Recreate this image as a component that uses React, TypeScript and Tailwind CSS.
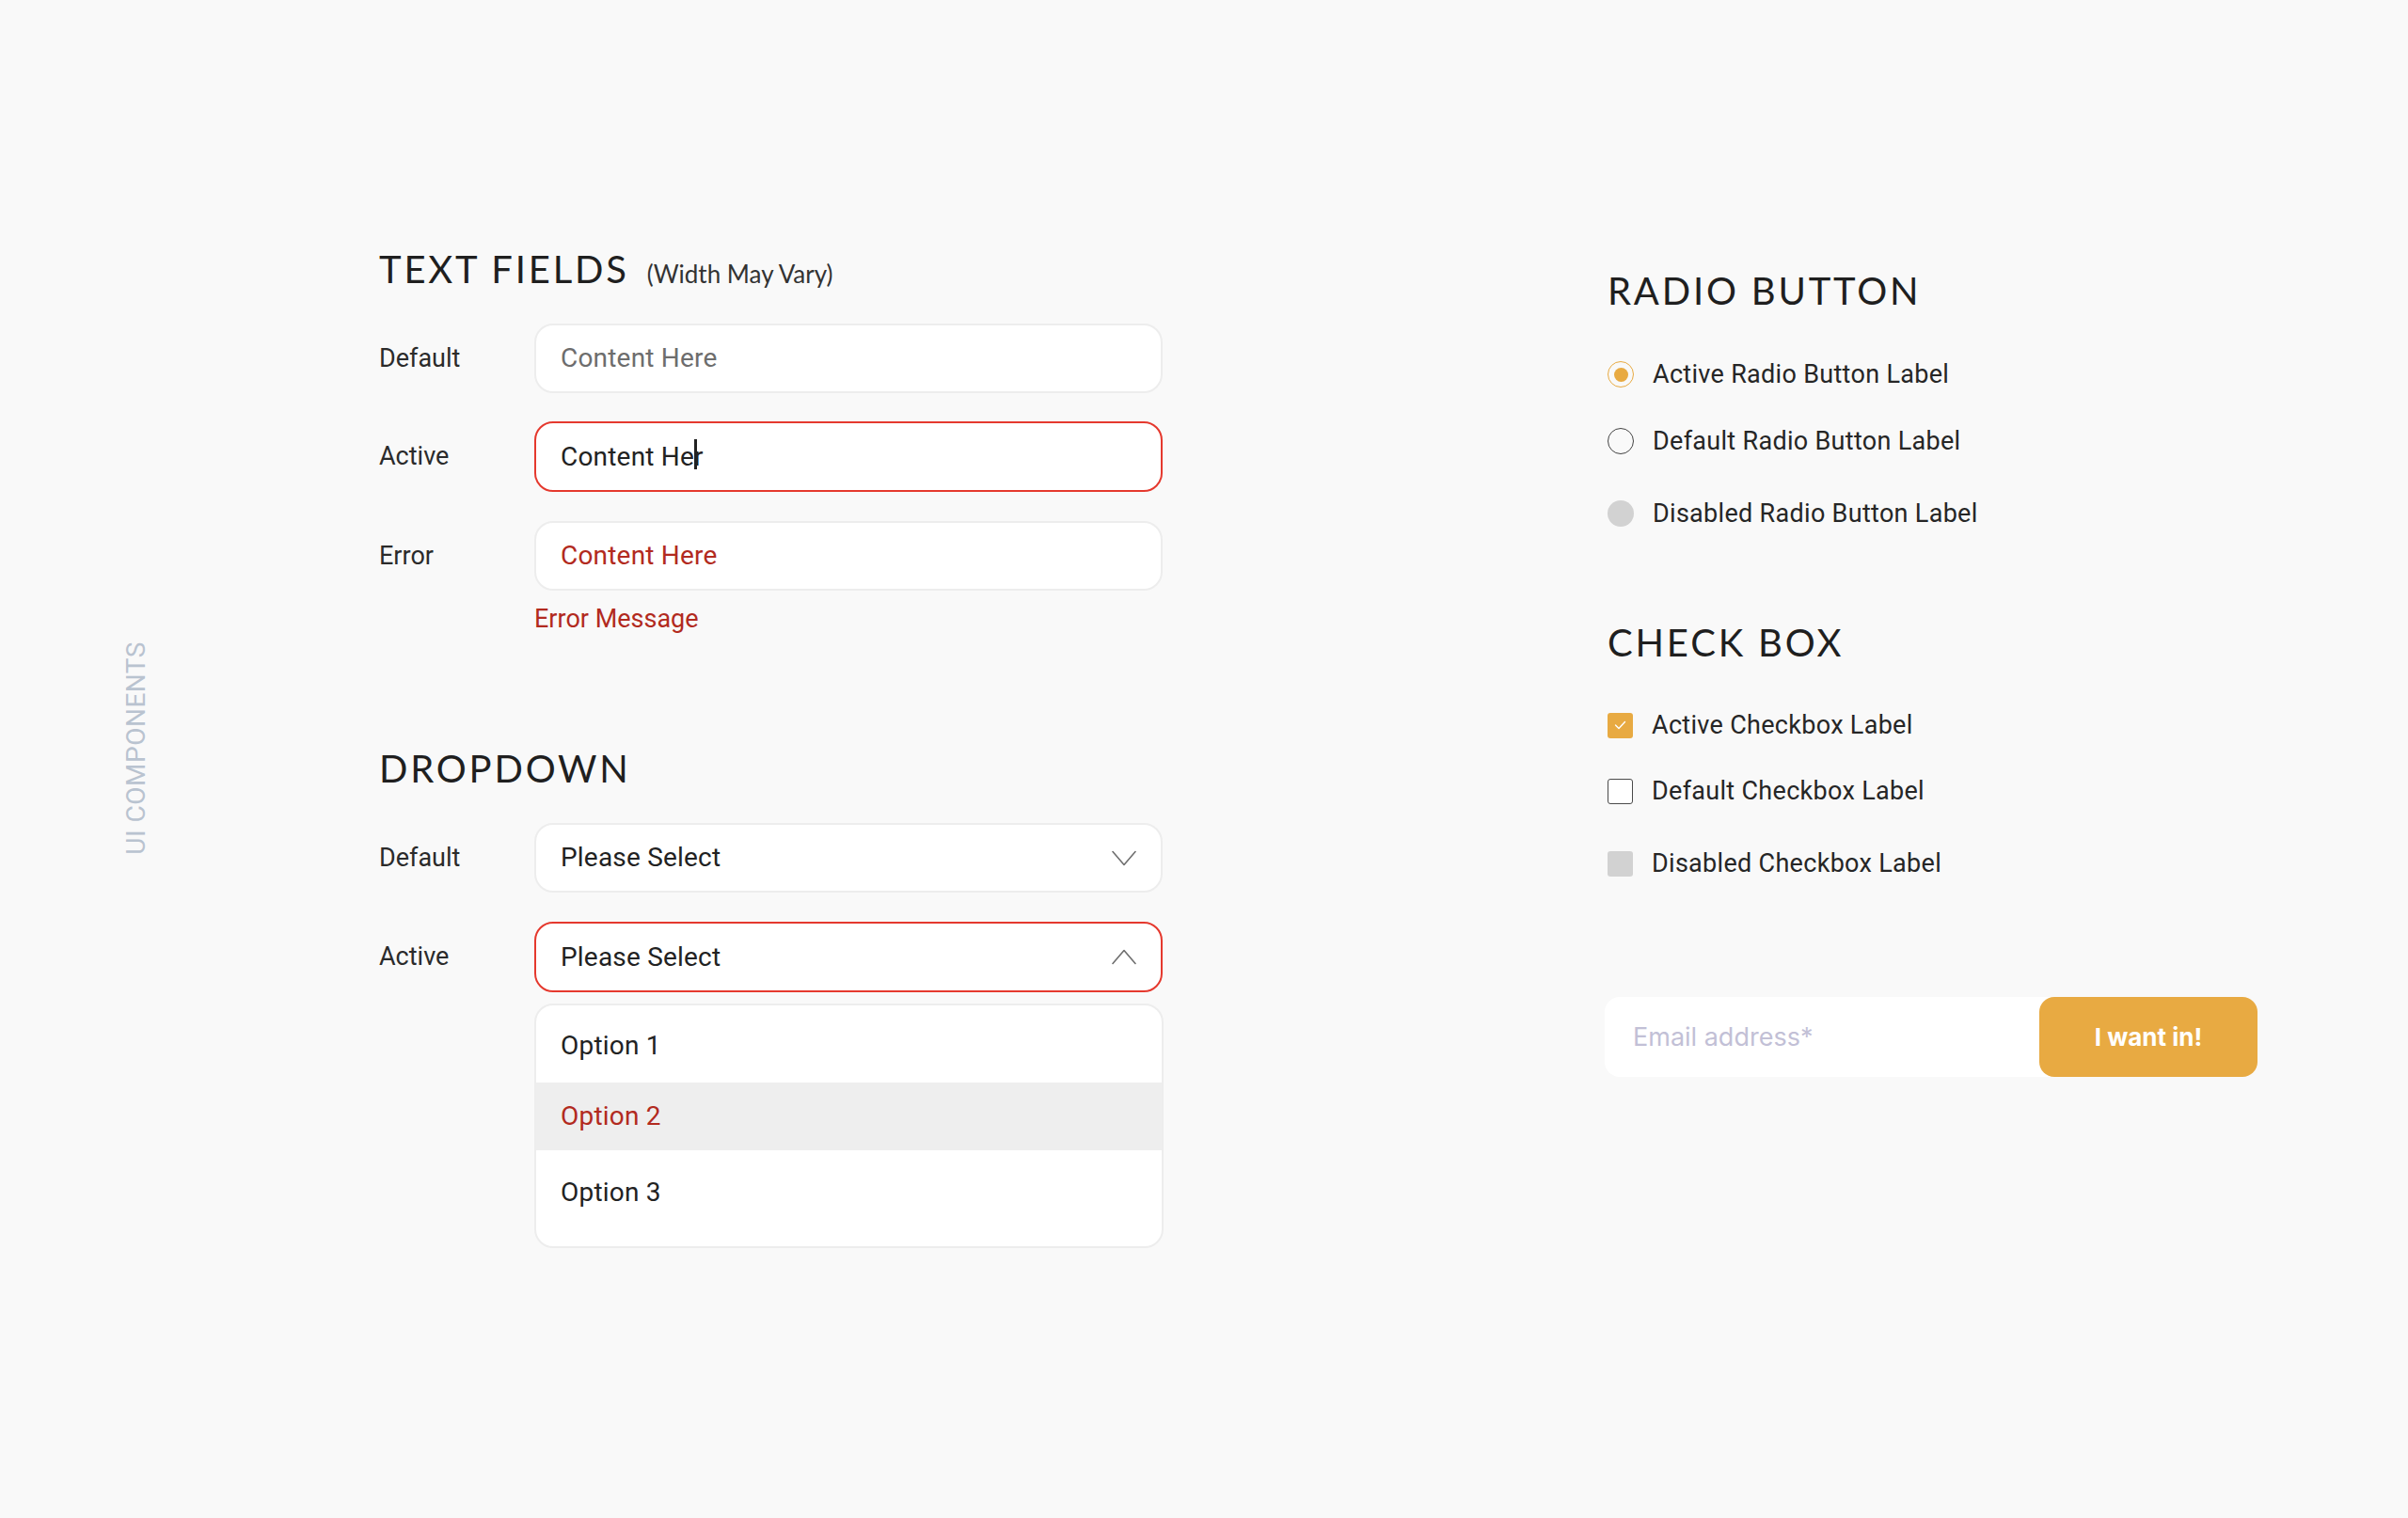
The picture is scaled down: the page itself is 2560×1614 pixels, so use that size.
import React from "react";

const Chevron = ({up}: {up?: boolean}) => (
    <svg width="26" height="17" viewBox="0 0 26 17" fill="none" className={up ? "rotate-180" : ""}>
        <path d="M1 1.5 L13 15.5 L25 1.5" stroke="#6f6f6f" strokeWidth="1.6" strokeLinecap="round" strokeLinejoin="round"/>
    </svg>
);

const Heading = ({children}: {children: React.ReactNode}) => (
    <h2 className="font-['Lato',sans-serif] font-normal text-[40px] leading-[40px] tracking-[2.8px] text-[#1f1f1f]">
        {children}
    </h2>
);

const Row = ({label, className, children}: {label: string; className?: string; children: React.ReactNode}) => (
    <div className={"flex items-center " + (className ?? "")}>
        <div className="w-[165px] shrink-0 text-[27px] text-[#2b2b2b]">{label}</div>
        {children}
    </div>
);

const Box = ({active, children}: {active?: boolean; children: React.ReactNode}) => (
    <div
        className={
            active
                ? "w-[669px] h-[75px] rounded-[20px] bg-white border-2 border-[#e5392e] flex items-center pl-[26px] pr-[26px] text-[28px] tracking-[0.2px]"
                : "w-[669px] h-[74px] rounded-[20px] bg-white border-2 border-[#ededed] flex items-center pl-[26px] pr-[26px] text-[28px] tracking-[0.2px]"
        }
    >
        {children}
    </div>
);

const Radio = ({state}: {state: "active" | "default" | "disabled"}) => {
    if (state === "active") {
        return (
            <span className="w-[28px] h-[28px] rounded-full border-[1.5px] border-[#e8aa42] flex items-center justify-center">
                <span className="w-[15px] h-[15px] rounded-full bg-[#e8aa42]"/>
            </span>
        );
    }
    if (state === "default") {
        return <span className="w-[28px] h-[28px] rounded-full border-[1.5px] border-[#444]"/>;
    }
    return <span className="w-[28px] h-[28px] rounded-full bg-[#d2d2d2]"/>;
};

const Check = ({state}: {state: "active" | "default" | "disabled"}) => {
    if (state === "active") {
        return (
            <span className="w-[27px] h-[27px] rounded-[3px] bg-[#e8aa42] flex items-center justify-center">
                <svg width="13" height="10" viewBox="0 0 13 10" fill="none">
                    <path d="M1.5 5 L5 8.5 L11.5 1.5" stroke="white" strokeWidth="1.4" strokeLinecap="round" strokeLinejoin="round"/>
                </svg>
            </span>
        );
    }
    if (state === "default") {
        return <span className="w-[27px] h-[27px] rounded-[3px] border-[1.5px] border-[#4a4a4a] bg-white"/>;
    }
    return <span className="w-[27px] h-[27px] rounded-[3px] bg-[#d2d2d2]"/>;
};

const Item = ({className, children}: {className?: string; children: React.ReactNode}) => (
    <div className={"flex items-center h-[40px] " + (className ?? "")}>
        {children}
    </div>
);

const label = "ml-[20px] text-[27px] tracking-[0.3px] text-[#262626]";

export default function App() {
    return (
        <div className="min-h-[1614px] w-full bg-[#f9f9f9] flex font-['Roboto',sans-serif]">
            {/* side label */}
            <aside className="w-[403px] shrink-0 pl-[131px] pt-[682px]">
                <div className="w-fit [writing-mode:vertical-rl] rotate-180 text-[28px] leading-[28px] tracking-[0.5px] text-[#b9c3d0]">
                    UI COMPONENTS
                </div>
            </aside>

            {/* text fields + dropdown */}
            <section className="w-[833px] shrink-0 pt-[266px]">
                <div className="flex items-baseline gap-[19px]">
                    <Heading>TEXT FIELDS</Heading>
                    <span className="font-['Lato',sans-serif] text-[26px] text-[#333]">(Width May Vary)</span>
                </div>

                <Row label="Default" className="mt-[33px]">
                    <Box><span className="text-[#6d6d6d]">Content Here</span></Box>
                </Row>
                <Row label="Active" className="mt-[30px]">
                    <Box active>
                        <span className="text-[#222]">Content He</span>
                        <span className="relative text-[#222]">
                            r
                            <span className="absolute left-0 top-[2px] w-[3px] h-[32px] bg-[#222]"/>
                        </span>
                    </Box>
                </Row>
                <Row label="Error" className="mt-[31px]">
                    <Box><span className="text-[#b22a20]">Content Here</span></Box>
                </Row>
                <div className="ml-[165px] mt-[14px] text-[27px] leading-[32px] text-[#b22a20]">Error Message</div>

                <div className="mt-[123px]">
                    <Heading>DROPDOWN</Heading>
                </div>

                <Row label="Default" className="mt-[38px]">
                    <Box>
                        <span className="flex-1 text-[#222]">Please Select</span>
                        <Chevron/>
                    </Box>
                </Row>
                <Row label="Active" className="mt-[31px]">
                    <Box active>
                        <span className="flex-1 text-[#222]">Please Select</span>
                        <Chevron up/>
                    </Box>
                </Row>
                <div className="ml-[165px] mt-[12px] w-[669px] rounded-[20px] bg-white border-2 border-[#ededed] pt-[3px] pb-[12px] overflow-hidden text-[28px] tracking-[0.2px]">
                    <div className="h-[79px] flex items-center pl-[26px] text-[#222]">Option 1</div>
                    <div className="h-[72px] flex items-center pl-[26px] bg-[#eeeeee] text-[#b22a20]">Option 2</div>
                    <div className="h-[90px] flex items-center pl-[26px] text-[#222]">Option 3</div>
                </div>
            </section>

            {/* radio + checkbox + form */}
            <section className="ml-[473px] pt-[289px]">
                <Heading>RADIO BUTTON</Heading>
                <Item className="mt-[49px]">
                    <Radio state="active"/>
                    <span className={label}>Active Radio Button Label</span>
                </Item>
                <Item className="mt-[31px]">
                    <Radio state="default"/>
                    <span className={label}>Default Radio Button Label</span>
                </Item>
                <Item className="mt-[37px]">
                    <Radio state="disabled"/>
                    <span className={label}>Disabled Radio Button Label</span>
                </Item>

                <div className="mt-[97px]">
                    <Heading>CHECK BOX</Heading>
                </div>
                <Item className="mt-[48px]">
                    <Check state="active"/>
                    <span className={label}>Active Checkbox Label</span>
                </Item>
                <Item className="mt-[30px]">
                    <Check state="default"/>
                    <span className={label}>Default Checkbox Label</span>
                </Item>
                <Item className="mt-[37px]">
                    <Check state="disabled"/>
                    <span className={label}>Disabled Checkbox Label</span>
                </Item>

                <div className="mt-[122px] -ml-[3px] w-[694px] h-[85px] flex bg-white rounded-[16px]">
                    <div className="flex-1 flex items-center pl-[30px] pt-[2px] font-['Inter',sans-serif] text-[27px] text-[#c2c0d6]">
                        Email address*
                    </div>
                    <button className="w-[232px] h-full rounded-[16px] bg-[#e8aa42] text-white font-['Inter',sans-serif] font-bold text-[26px]">
                        I want in!
                    </button>
                </div>
            </section>
        </div>
    );
}
